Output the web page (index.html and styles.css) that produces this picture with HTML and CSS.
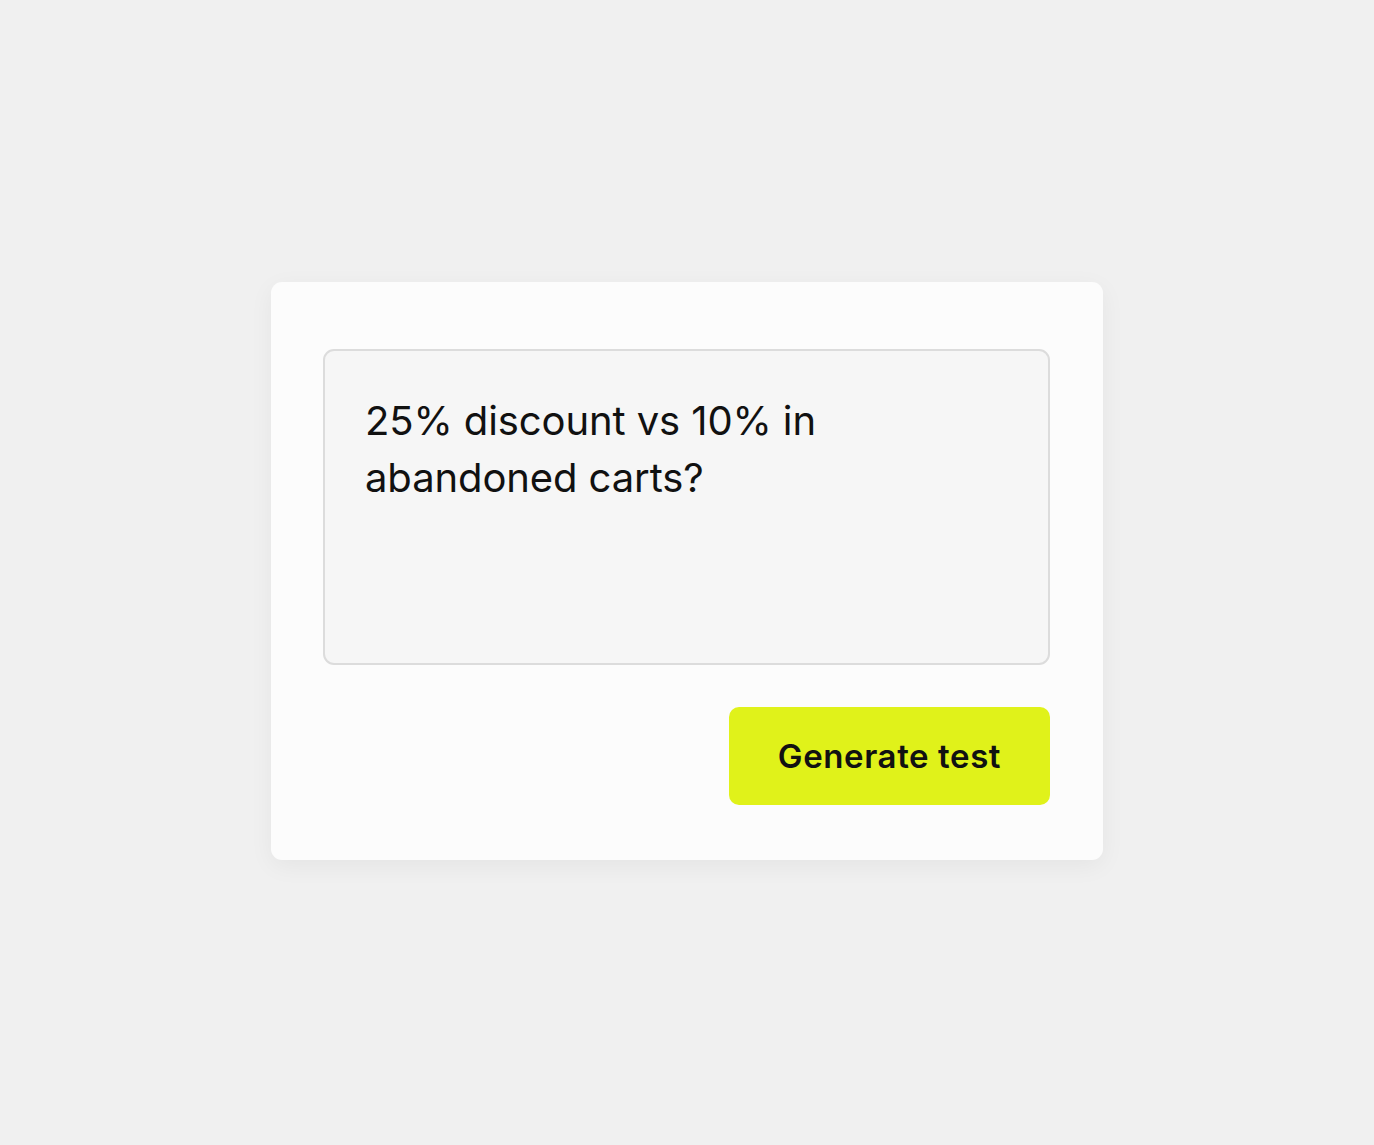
FILE: index.html
```html
<!DOCTYPE html>
<html lang="en">
<head>
  <meta charset="UTF-8" />
  <meta name="viewport" content="width=device-width, initial-scale=1.0" />
  <title>Generate test</title>
  <link rel="stylesheet" href="styles.css">
</head>
<body>
  <div class="page">
    <div class="card">
      <div class="prompt-box">
        <p class="prompt-text">25% discount vs 10% in<br>abandoned carts?</p>
      </div>
      <div class="actions">
        <button class="generate-btn">Generate test</button>
      </div>
    </div>
  </div>
</body>
</html>
```

FILE: styles.css
```css
* {
  margin: 0;
  padding: 0;
  box-sizing: border-box;
}
body {
  background: #f0f0f0;
  color: #111;
  font-family: Inter, "Noto Sans", sans-serif;
}
.page {
  width: 100vw;
  height: 100vh;
  display: flex;
  justify-content: center;
  padding-top: 282px;
}
.card {
  width: 832px;
  height: 578px;
  background: #fcfcfc;
  border-radius: 11px;
  padding: 67px 53px 55px 52px;
  box-shadow: 0 6px 24px rgba(0, 0, 0, 0.05);
}
.prompt-box {
  height: 316px;
  background: #f6f6f6;
  border: 2px solid #dcdcdc;
  border-radius: 11px;
  padding: 41px 40px;
}
.prompt-text {
  font-size: 40px;
  line-height: 57px;
  letter-spacing: -0.1px;
  color: #111;
}
.actions {
  display: flex;
  justify-content: flex-end;
  margin-top: 42px;
}
.generate-btn {
  width: 321px;
  height: 98px;
  border: none;
  border-radius: 10px;
  background: #e0f21a;
  color: #111;
  font-family: Inter, "Noto Sans", sans-serif;
  font-size: 33px;
  font-weight: 600;
  letter-spacing: 0.6px;
  cursor: pointer;
}
```
